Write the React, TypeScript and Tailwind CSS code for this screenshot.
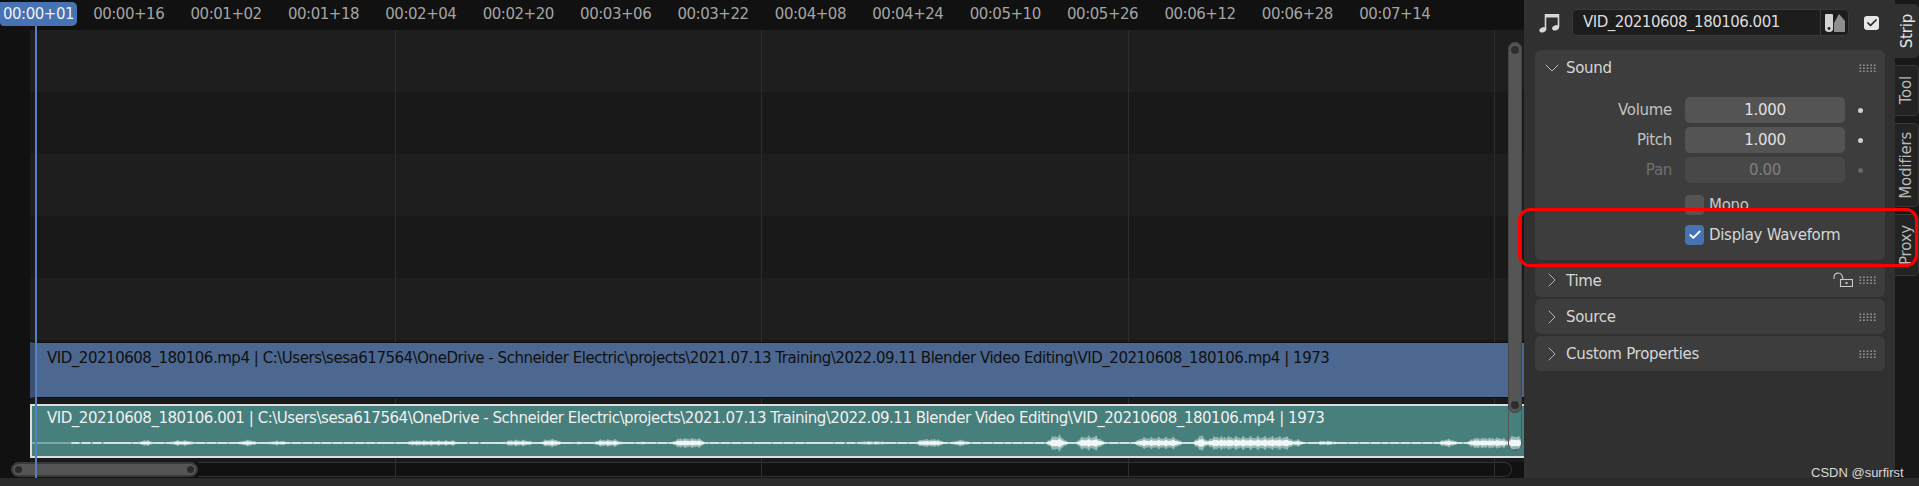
import { ChevronDown, ChevronRight, Check } from "lucide-react";

const rulerLabels = ["00:00+16", "00:01+02", "00:01+18", "00:02+04", "00:02+20", "00:03+06", "00:03+22", "00:04+08", "00:04+24", "00:05+10", "00:05+26", "00:06+12", "00:06+28", "00:07+14"];
const path = "C:\\Users\\sesa617564\\OneDrive - Schneider Electric\\projects\\2021.07.13 Training\\2022.09.11 Blender Video Editing\\VID_20210608_180106.mp4 | 1973";

// start x, end x, amplitude in px
const bursts = [
  [141, 151, 3.5], [171, 192, 3], [241, 255, 3.5], [269, 286, 2.5], [408, 457, 3], [506, 531, 3.5],
  [543, 559, 4.5], [575, 580, 2.5], [596, 620, 4], [640, 644, 2.5], [675, 703, 5.5], [860, 885, 2],
  [918, 942, 4.5], [954, 967, 3.5], [1050, 1064, 9], [1079, 1101, 8], [1138, 1179, 6.5], [1197, 1205, 10],
  [1209, 1292, 7.5], [1295, 1300, 6], [1317, 1335, 2.5], [1441, 1455, 4.5], [1470, 1507, 6], [1509, 1521, 9],
];

function ampAt(x: number) {
  const noise = 0.6 + 0.4 * Math.abs(Math.sin(x * 1.3) + Math.sin(x * 0.41 + 1)) / 2;
  let amp = x < 72 ? 0.35 : Math.sin(x * 1.7) + Math.sin(x * 0.6) > -1.5 ? 0.75 : 0.35;
  for (const [a, b, h] of bursts) {
    if (x >= a - 5 && x <= b + 5) {
      const edge = Math.min(1, Math.min(x - a + 5, b + 5 - x) / 9);
      amp = Math.max(amp, h * edge * noise);
    }
  }
  return amp;
}

function wavePath(scale: number) {
  const top: string[] = [];
  const bottom: string[] = [];
  for (let x = 30; x <= 1521; x++) {
    const a = ampAt(x);
    const h = a < 1 ? a : a * scale;
    top.push(`${x},${(11 - h).toFixed(1)}`);
    bottom.unshift(`${x},${(11 + h).toFixed(1)}`);
  }
  return "M" + top.concat(bottom).join("L") + "Z";
}

function Grip() {
  return (
    <svg width="17" height="8" viewBox="0 0 17 8" className="shrink-0">
      {[0, 1, 2].map((r) =>
        [0, 1, 2, 3, 4].map((c) => <rect key={`${r}${c}`} x={c * 3.6 + 0.5} y={r * 3 + 0.5} width="1.6" height="1.4" fill="#a0a0a0" />)
      )}
    </svg>
  );
}

function Field({ label, value, dim }: { label: string; value: string; dim?: boolean }) {
  return (
    <div className="flex items-center h-[26px]">
      <span className={`w-[137px] text-right ${dim ? "text-[#6f6f6f]" : "text-[#c2c2c2]"}`}>{label}</span>
      <div className={`ml-[13px] w-[160px] h-full rounded-[5px] flex items-center justify-center ${dim ? "bg-[#484848] text-[#7f7f7f]" : "bg-[#545454] text-[#e0e0e0]"}`}>{value}</div>
      <span className={`ml-[13px] w-[5px] h-[5px] rounded-full ${dim ? "bg-[#666]" : "bg-[#d0d0d0]"}`} />
    </div>
  );
}

function Collapsed({ title, lock, h }: { title: string; lock?: boolean; h: string }) {
  return (
    <div className={`${h} rounded-[6px] bg-[#3d3d3d] flex items-center pl-[5px] pr-[9px]`}>
      <ChevronRight size={24} strokeWidth={1} className="text-[#b5b5b5]" />
      <span className="ml-[2px] pt-[2px] text-[#d6d6d6] flex-1">{title}</span>
      {lock && (
        <svg width="20" height="15" viewBox="0 0 20 15" className="mr-[6px] mb-[1px]">
          <path d="M1 7 V5 A4.2 4.2 0 0 1 9 3.5 L10 7" stroke="#c8c8c8" strokeWidth="1.1" fill="none" />
          <rect x="7.5" y="7.5" width="12" height="7" fill="none" stroke="#c8c8c8" strokeWidth="1.1" />
          <rect x="12.5" y="10" width="2" height="2" fill="#c8c8c8" />
        </svg>
      )}
      <Grip />
    </div>
  );
}

function Tab({ label, h, active }: { label: string; h: string; active?: boolean }) {
  return (
    <div className={`${h} w-full rounded-r-[5px] flex items-center justify-center ${active ? "bg-[#303030] text-[#e4e4e4]" : "bg-[#232323] text-[#b8b8b8] border border-l-0 border-[#383838]"}`}>
      <span className="[writing-mode:vertical-rl] rotate-180 leading-none text-[15px] tracking-[-0.2px]">{label}</span>
    </div>
  );
}

export default function App() {
  const bands = ["bg-[#1e1e1e]", "bg-[#191919]", "bg-[#1e1e1e]", "bg-[#191919]", "bg-[#1e1e1e]"];
  return (
    <div className="relative w-[1919px] h-[486px] overflow-hidden bg-[#2b2b2b] text-[15px] tracking-[-0.3px] font-['DejaVu_Sans',sans-serif]">
      <div className="flex h-[478px]">
        {/* sequencer */}
        <div className="relative w-[1524px] flex flex-col bg-[#111] tracking-[-0.47px]">
          <div className="h-[30px] flex items-start pt-[2px] text-[#a4a4a4] bg-[#111]">
            <div className="w-[77px] h-[24px] rounded-r-[5px] rounded-bl-[4px] bg-[#4772b3] text-[#f0f0f0] flex items-center justify-center">00:00+01</div>
            <div className="ml-[3px] flex">
              {rulerLabels.map((t) => (
                <div key={t} className="w-[97.4px] h-[24px] flex items-center justify-center">{t}</div>
              ))}
            </div>
          </div>
          <div className="flex flex-1">
            <div className="w-[30px] bg-[#111]" />
            <div className="flex-1 flex flex-col min-w-0">
              {bands.map((b, i) => (
                <div key={i} className={`${b} h-[62px]`} />
              ))}
              <div className="h-[61px] bg-[#191919] pt-[2px]">
                <div className="relative z-20 h-[56px] bg-[#4c6890] border-y border-y-[#0e0e0e] border-l-[5px] border-l-[#3a5172] pl-[12px] pt-[4px] text-[#101010] whitespace-nowrap overflow-hidden">
                  VID_20210608_180106.mp4 | {path}
                </div>
              </div>
              <div className="h-[61px] bg-[#191919] pt-[3px]">
                <div className="relative z-20 h-[54px] bg-[#467f7c] border-y-2 border-l-2 border-[#dedede] pl-[15px] pt-[2px] text-[#f0f0f0] overflow-hidden">
                  <div className="h-[20px] leading-[20px] whitespace-nowrap">VID_20210608_180106.001 | {path}</div>
                  <svg width="1494" height="22" viewBox="30 0 1494 22" className="mt-[4px] -ml-[17px]">
                    <path d={wavePath(1)} fill="#93b8b5" />
                    <path d={wavePath(0.5)} fill="#f2f6f5" />
                  </svg>
                </div>
              </div>
              <div className="h-[16px] flex items-start -ml-[19px]">
                <div className="relative z-20 w-[187px] h-[15px] rounded-full bg-[#555] border-2 border-[#3a3a3a] flex items-center justify-between px-[2px]">
                  <span className="w-[7px] h-[7px] rounded-full bg-[#2a2a2a]" />
                  <span className="w-[7px] h-[7px] rounded-full bg-[#2a2a2a]" />
                </div>
                <div className="w-[1314px] h-[15px] rounded-r-full border border-l-0 border-[#333]" />
              </div>
            </div>
          </div>
          {[395, 761, 1128, 1494].map((x) => (
            <div key={x} className="absolute top-[30px] bottom-0 w-px bg-[#2e2e2e] z-10" style={{ left: x }} />
          ))}
          <div className="absolute left-[35px] top-[26px] bottom-0 w-[2px] bg-[#5680c2] z-30" />
          <div className="absolute z-30 left-[1508px] top-[42px] w-[14px] h-[409px] rounded-full border border-[#555]">
            <div className="h-[371px] -m-px rounded-full bg-[#555] border border-[#444] flex flex-col items-center justify-between py-[3px]">
              <span className="w-[8px] h-[8px] rounded-full bg-[#2e2e2e]" />
              <span className="w-[8px] h-[8px] rounded-full bg-[#2e2e2e]" />
            </div>
          </div>
        </div>

        {/* sidebar */}
        <div className="w-[371px] bg-[#303030] pl-[11px] pr-[10px] pt-[9px] text-[#d6d6d6]">
          <div className="flex items-center h-[27px]">
            <svg width="21" height="20" viewBox="0 0 21 20" className="ml-[4px] shrink-0">
              <path d="M6.5 16 V2 H19.5 V14" stroke="#d8d8d8" strokeWidth="1.6" fill="none" />
              <rect x="6" y="1" width="14" height="3.5" fill="#d8d8d8" />
              <ellipse cx="3.8" cy="16.8" rx="3.6" ry="2.5" transform="rotate(-20 3.8 16.8)" fill="#d8d8d8" />
              <ellipse cx="16.6" cy="14.8" rx="3.6" ry="2.5" transform="rotate(-20 16.6 14.8)" fill="#d8d8d8" />
            </svg>
            <div className="ml-[12px] w-[277px] h-full rounded-[5px] bg-[#1d1d1d] border border-[#3a3a3a] flex items-center">
              <span className="flex-1 pl-[10px] text-[#dcdcdc] tracking-[-0.5px]">VID_20210608_180106.001</span>
              <div className="w-[28px] h-full border-l border-[#3d3d3d] flex items-center justify-center">
                <svg width="20" height="20" viewBox="0 0 20 20">
                  <path d="M9 19 V10 L14 1 L20 8 V19 Z" fill="#8e8e8e" />
                  <path d="M0 2 Q0 1 1 1 H7 Q8 1 8 2 V16 Q8 19 4 19 Q0 19 0 16 Z" fill="#d4d4d4" />
                  <circle cx="4" cy="15.5" r="1.4" fill="#1d1d1d" />
                </svg>
              </div>
            </div>
            <div className="ml-[15px] w-[15px] h-[14px] rounded-[3px] bg-[#e6e6e6] flex items-center justify-center">
              <Check size={12} strokeWidth={3.5} className="text-[#222]" />
            </div>
          </div>

          <div className="mt-[14px] h-[210px] rounded-[6px] bg-[#3d3d3d] pt-[6px]">
            <div className="h-[24px] flex items-center pl-[5px] pr-[9px]">
              <ChevronDown size={24} strokeWidth={1} className="text-[#b5b5b5]" />
              <span className="ml-[2px] pt-[1px] flex-1">Sound</span>
              <Grip />
            </div>
            <div className="mt-[17px] flex flex-col gap-[4px]">
              <Field label="Volume" value="1.000" />
              <Field label="Pitch" value="1.000" />
              <Field label="Pan" value="0.00" dim />
            </div>
            <div className="mt-[12px] ml-[150px] flex items-center h-[20px] text-[#c8c8c8]">
              <span className="w-[19px] h-[20px] rounded-[4px] bg-[#545454]" />
              <span className="ml-[5px]">Mono</span>
            </div>
            <div className="mt-[10px] ml-[150px] flex items-center h-[20px]">
              <span className="w-[19px] h-[20px] rounded-[4px] bg-[#4772b3] flex items-center justify-center">
                <Check size={14} strokeWidth={3.2} className="text-white" />
              </span>
              <span className="ml-[5px]">Display Waveform</span>
            </div>
          </div>

          <div className="mt-[3px] flex flex-col gap-[2px]">
            <Collapsed title="Time" lock h="h-[34px]" />
            <Collapsed title="Source" h="h-[35px]" />
            <Collapsed title="Custom Properties" h="h-[35px]" />
          </div>
        </div>

        {/* tabs */}
        <div className="flex-1 bg-[#181818] pt-[4px] flex flex-col gap-[7px]">
          <Tab label="Strip" h="h-[54px]" active />
          <Tab label="Tool" h="h-[51px]" />
          <Tab label="Modifiers" h="h-[84px]" />
          <Tab label="Proxy" h="h-[62px]" />
        </div>
      </div>

      {/* annotation drawn on top of the screenshot */}
      <div className="absolute left-[1518px] top-[208px] w-[400px] h-[59px] rounded-[12px] border-[3px] border-[#f00] z-40" />
      <div className="absolute left-[1811px] top-[463px] text-[13px] tracking-normal text-[#d8d8d8] z-40 font-['Liberation_Sans',sans-serif]">CSDN @surfirst</div>
    </div>
  );
}
